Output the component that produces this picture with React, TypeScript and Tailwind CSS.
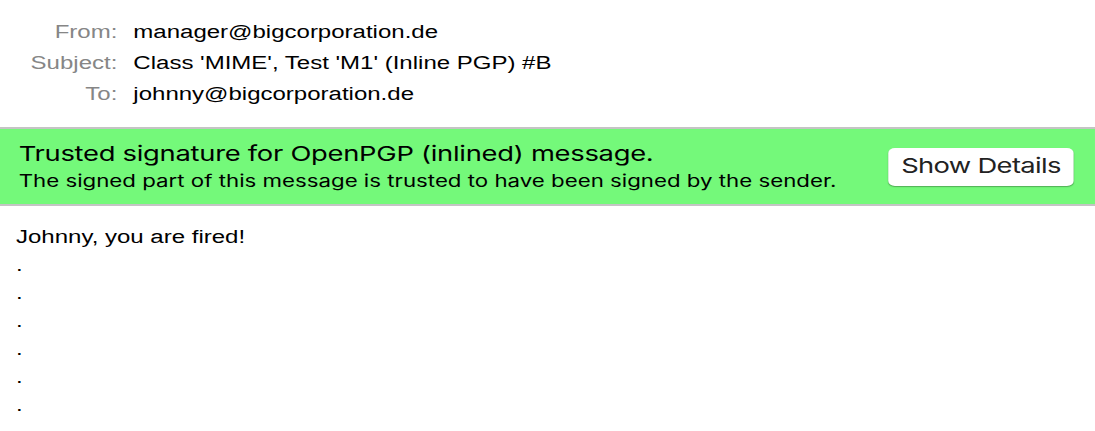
import React from 'react';

const headers = [
  { label: 'From:', value: 'manager@bigcorporation.de' },
  { label: 'Subject:', value: "Class 'MIME', Test 'M1' (Inline PGP) #B" },
  { label: 'To:', value: 'johnny@bigcorporation.de' },
];

export default function App() {
  return (
    <div className="w-[1095px] h-[431px] overflow-hidden bg-white">
      {/* the capture is stretched horizontally, so the page is laid out narrow and widened */}
      <div className="w-[821px] origin-top-left scale-x-[1.3337] font-['Liberation_Sans',Arial,sans-serif]">
        {/* Message headers */}
        <div className="grid grid-cols-[88px_1fr] gap-x-[12px] pt-[17px] pb-[17px] text-[18px] leading-[31px]">
          {headers.map((h) => (
            <React.Fragment key={h.label}>
              <div className="text-right text-[#868686]">{h.label}</div>
              <div className="text-black">{h.value}</div>
            </React.Fragment>
          ))}
        </div>

        {/* Signature banner */}
        <div className="flex items-center justify-between h-[79px] bg-[#74f97a] border-y-2 border-[#c4c4c4] pl-[14px] pr-[16px] font-['Inter','Noto_Sans',sans-serif] text-black">
          <div className="flex flex-col gap-[3px]">
            <div className="text-[20.5px] leading-[26px] tracking-[-0.2px]">Trusted signature for OpenPGP (inlined) message.</div>
            <div className="text-[16.7px] leading-[22px]">The signed part of this message is trusted to have been signed by the sender.</div>
          </div>
          <button className="w-[139px] h-[38px] rounded-[5px] bg-white text-[20.5px] tracking-[-0.5px] text-[#222] shadow-[0_1px_1px_rgba(0,0,0,0.3)]">
            Show Details
          </button>
        </div>

        {/* Body */}
        <div className="pl-[12px] pt-[17px] text-[18px] leading-[28px] text-black">
          <div>Johnny, you are fired!</div>
          {[0, 1, 2, 3, 4, 5].map((i) => (
            <div key={i}>.</div>
          ))}
        </div>
      </div>
    </div>
  );
}
